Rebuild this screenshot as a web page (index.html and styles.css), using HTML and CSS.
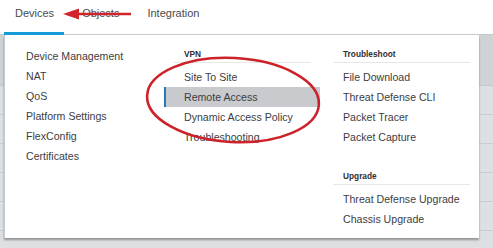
FILE: index.html
```html
<!DOCTYPE html>
<html lang="en">

<head>
  <meta charset="UTF-8">
  <meta name="viewport" content="width=device-width, initial-scale=1.0">
  <title>Devices menu</title>
  <link rel="stylesheet" href="styles.css">
</head>

<body>
  <nav class="topnav">
    <a class="tab active">Devices</a>
    <a class="tab">Objects</a>
    <a class="tab">Integration</a>
  </nav>

  <div class="content">
    <div class="table-head"></div>
    <div class="row"></div>
    <div class="row"></div>
    <div class="row"></div>
    <div class="row"></div>
    <div class="row"></div>
  </div>

  <div class="dropdown">
    <ul class="col col-main">
      <li>Device Management</li>
      <li>NAT</li>
      <li>QoS</li>
      <li>Platform Settings</li>
      <li>FlexConfig</li>
      <li>Certificates</li>
    </ul>
    <div class="col col-vpn">
      <div class="group-title">VPN</div>
      <ul>
        <li>Site To Site</li>
        <li class="selected">Remote Access</li>
        <li>Dynamic Access Policy</li>
        <li>Troubleshooting</li>
      </ul>
    </div>
    <div class="col col-tools">
      <div class="group-title">Troubleshoot</div>
      <ul>
        <li>File Download</li>
        <li>Threat Defense CLI</li>
        <li>Packet Tracer</li>
        <li>Packet Capture</li>
      </ul>
      <div class="group-title spaced">Upgrade</div>
      <ul>
        <li>Threat Defense Upgrade</li>
        <li>Chassis Upgrade</li>
      </ul>
    </div>
  </div>

  <!-- red markup drawn over the screenshot -->
  <svg class="markup" viewBox="0 0 493 248" width="493" height="248">
    <line x1="131" y1="14" x2="74" y2="14" stroke="#d0262b" stroke-width="2.4" />
    <polygon points="63,14 79,8.5 79,19.5" fill="#d0262b" />
    <ellipse cx="233" cy="100" rx="86" ry="42" fill="none" stroke="#cc2229" stroke-width="2.6"
      transform="rotate(3 233 100)" />
  </svg>
</body>

</html>
```

FILE: styles.css
```css
body {
  margin: 0;
  width: 493px;
  height: 248px;
  overflow: hidden;
  position: relative;
  background: #dde0e3;
  font-family: 'Liberation Sans', Arial, Helvetica, sans-serif;
  color: #3d3d3f;
}

.topnav {
  display: flex;
  gap: 7px;
  height: 35px;
  padding-left: 4px;
  background: #fff;
  border-bottom: 1px solid #c6c8ca;
  box-sizing: border-box;
}

.tab {
  display: flex;
  align-items: center;
  padding: 0 10px 6px 11px;
  font-size: 11px;
  color: #4a4a4c;
  border-bottom: 3px solid transparent;
  margin-bottom: -1px;
}

.tab.active {
  border-bottom-color: #179bd7;
}

.content {
  height: 213px;
}

.table-head {
  height: 50px;
  background: #cfd3d6;
  border-bottom: 1px solid #c4c8cb;
}

.row {
  height: 28px;
  border-bottom: 1px solid #c9cdd0;
}

.dropdown {
  position: absolute;
  top: 35px;
  left: 4px;
  width: 475px;
  height: 203px;
  box-sizing: border-box;
  padding-top: 11px;
  display: grid;
  grid-template-columns: 159px 156px 1fr;
  background: #fff;
  border-left: 1px solid #c8cbce;
  box-shadow: 0 2px 2px rgba(0, 0, 0, 0.35);
}

ul {
  list-style: none;
  margin: 0;
  padding: 0;
}

li {
  height: 20px;
  line-height: 20px;
  font-size: 10.6px;
  white-space: nowrap;
}

.col-main li {
  padding-left: 21px;
}

.col-vpn li {
  padding-left: 20px;
}

.col-tools li {
  padding-left: 23px;
}

.group-title {
  height: 16px;
  line-height: 16px;
  margin: 0 9px 4px 10px;
  padding-left: 10px;
  font-size: 8.3px;
  font-weight: bold;
  color: #2f2f31;
  border-bottom: 1px solid #e6e7e8;
}

.col-tools .group-title {
  margin-left: 13px;
}

.group-title.spaced {
  margin-top: 21px;
}

li.selected {
  background: #c9cacd;
  box-shadow: inset 2px 0 0 #1b7fb5;
}

.markup {
  position: absolute;
  top: 0;
  left: 0;
  pointer-events: none;
}
```
